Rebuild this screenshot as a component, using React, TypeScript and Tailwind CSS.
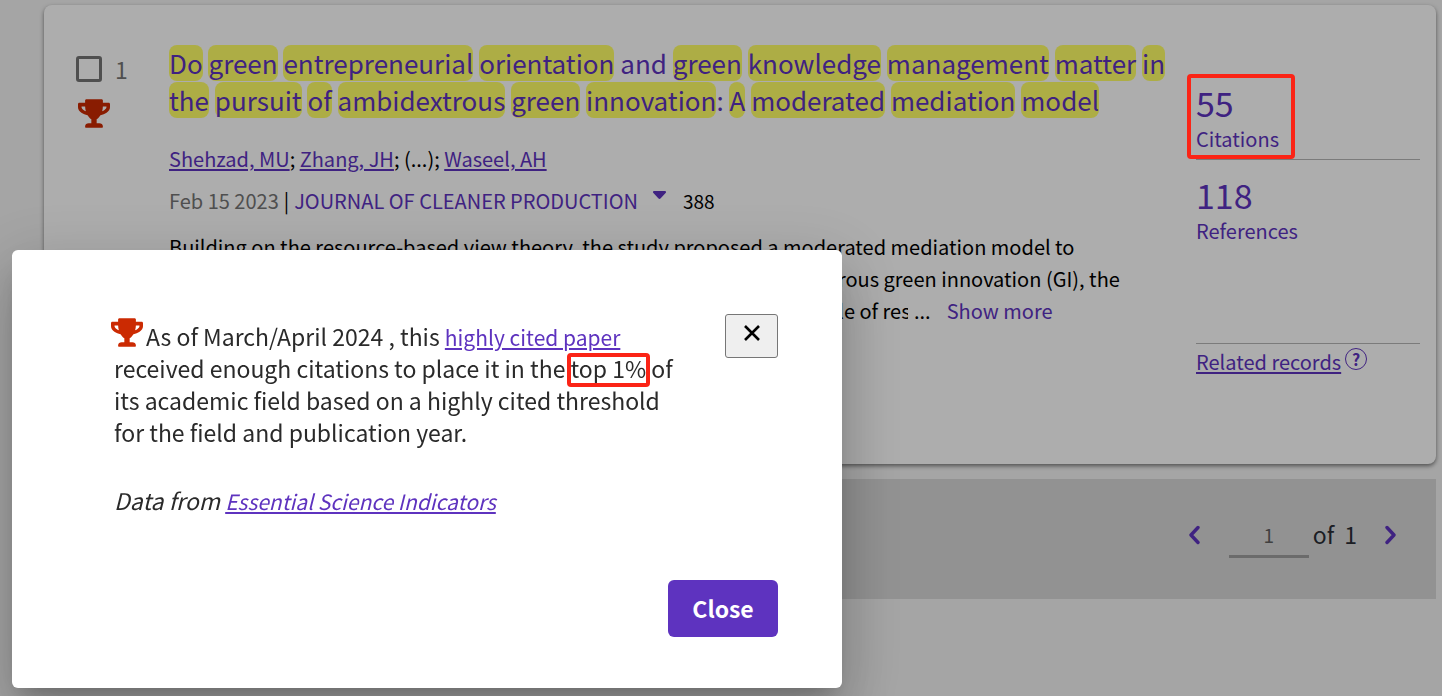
import { useState } from 'react';
import { FaTrophy } from 'react-icons/fa';

type TitleWord = {
  text: string;
  plain?: boolean;
  after?: string;
};

const titleWords: TitleWord[] = [
  { text: 'Do' },
  { text: 'green' },
  { text: 'entrepreneurial' },
  { text: 'orientation' },
  { text: 'and', plain: true },
  { text: 'green' },
  { text: 'knowledge' },
  { text: 'management' },
  { text: 'matter' },
  { text: 'in' },
  { text: 'the' },
  { text: 'pursuit' },
  { text: 'of' },
  { text: 'ambidextrous' },
  { text: 'green' },
  { text: 'innovation', after: ':' },
  { text: 'A' },
  { text: 'moderated' },
  { text: 'mediation' },
  { text: 'model' },
];

function RecordTitle() {
  return (
    <h3 className="text-[26px] leading-[37px]">
      <a href="#record" className="text-[#5e33bf]">
        {titleWords.map((word, index) => (
          <span key={index}>
            {word.plain ? (
              word.text
            ) : (
              <mark className="inline-block rounded-lg bg-[#ffff66] leading-9 text-inherit">
                {word.text}
              </mark>
            )}
            {word.after}{' '}
          </span>
        ))}
      </a>
    </h3>
  );
}

function RecordStats() {
  return (
    <aside className="flex w-56 shrink-0 flex-col pt-10 text-xl text-[#5e33bf]">
      <div className="relative border-b border-[#b5b5b5] pb-1.5">
        <a href="#citations" className="block">
          <span className="block text-[34px] leading-[44px]">55</span>
          <span className="block leading-7">Citations</span>
        </a>
        <span className="pointer-events-none absolute -top-[7px] -left-[9px] z-20 h-[85px] w-[108px] rounded-sm border-4 border-[#fb2416]" />
      </div>
      <div className="pt-[13px]">
        <a href="#references" className="block">
          <span className="block text-[34px] leading-[44px]">118</span>
          <span className="block leading-7">References</span>
        </a>
      </div>
      <div className="mt-[98px] flex items-start gap-1 border-t border-[#b5b5b5] pt-1">
        <a
          href="#related"
          className="leading-7 underline decoration-2 underline-offset-2">
          Related records
        </a>
        <button
          type="button"
          aria-label="About related records"
          className="flex size-[22px] items-center justify-center rounded-full border border-[#5e33bf] text-base font-bold">
          ?
        </button>
      </div>
    </aside>
  );
}

function RecordCard() {
  const [selected, setSelected] = useState(false);

  return (
    <article className="flex min-h-[459px] rounded-lg bg-white pt-9 pr-4 pl-8 shadow-[0_2px_4px_rgba(0,0,0,0.5)]">
      <div className="w-[93px] shrink-0 pt-3">
        <label className="flex items-center gap-[13px] text-[23px] leading-8 text-[#757575]">
          <input
            type="checkbox"
            aria-label="Select record 1"
            checked={selected}
            onChange={(e) => setSelected(e.target.checked)}
            className="size-[26px] appearance-none rounded-[3px] border-3 border-[#757575] checked:bg-[#5e33bf]"
          />
          1
        </label>
        <FaTrophy className="mt-3.5 ml-0.5 h-[29px] w-8 text-[#cb2a02]" />
      </div>
      <div className="min-w-0 grow pt-[3px] pr-6">
        <RecordTitle />
        <p className="mt-[25px] text-xl leading-8">
          <a
            href="#shehzad"
            className="text-[#5e33bf] underline decoration-2 underline-offset-2">
            Shehzad, MU
          </a>
          ;{' '}
          <a
            href="#zhang"
            className="text-[#5e33bf] underline decoration-2 underline-offset-2">
            Zhang, JH
          </a>
          ; (...);{' '}
          <a
            href="#waseel"
            className="text-[#5e33bf] underline decoration-2 underline-offset-2">
            Waseel, AH
          </a>
        </p>
        <div className="mt-2.5 flex items-center text-xl leading-8">
          <span className="text-[#757575]">Feb 15 2023</span>
          <span className="px-[5px]">|</span>
          <button
            type="button"
            className="flex items-center gap-[15px] text-[#5e33bf]">
            JOURNAL OF CLEANER PRODUCTION
            <svg viewBox="0 0 13 8" className="mb-3 h-2 w-[13px]">
              <path
                d="M1.2 0h10.6c1.1 0 1.6 1.3.8 2.1L7.7 7.3a1.7 1.7 0 0 1-2.4 0L.4 2.1C-.4 1.3.1 0 1.2 0z"
                fill="currentColor"
              />
            </svg>
          </button>
          <span className="ml-[17px] text-[19px]">388</span>
        </div>
        <div className="mt-3.5 text-xl leading-8">
          <p>
            Building on the resource-based view theory, the study proposed a
            moderated mediation model to
          </p>
          <p>
            examine a link between green entrepreneurial orientation and
            ambidextrous green innovation (GI), the
          </p>
          <div className="flex">
            <p className="w-[739px] overflow-hidden whitespace-nowrap">
              mediating role of green knowledge management (GKM) &amp;
              moderating role of res
            </p>
            <span className="pl-1.5">...</span>
            <button type="button" className="pl-4 text-[#5e33bf]">
              Show more
            </button>
          </div>
        </div>
      </div>
      <RecordStats />
    </article>
  );
}

function Pagination() {
  const [page, setPage] = useState('1');

  return (
    <nav className="mt-[15px] flex h-[120px] items-center justify-end bg-[#d8d8d8] pr-[39px] pb-2.5 text-[23px] text-[#2a2d35]">
      <button type="button" aria-label="Previous page" className="mr-[29px] pt-0.5">
        <svg viewBox="0 0 12 20" className="h-5 w-3 text-[#5e33bf]">
          <path
            d="M10 2.5 L3 10 L10 17.5"
            fill="none"
            stroke="currentColor"
            strokeWidth="3.4"
            strokeLinecap="round"
            strokeLinejoin="round"
          />
        </svg>
      </button>
      <input
        type="text"
        aria-label="Page"
        value={page}
        onChange={(e) => setPage(e.target.value)}
        className="mt-1 h-[43px] w-20 border-b-3 border-[#9e9e9e] text-center text-[19px] text-[#616161]"
      />
      <span className="ml-1">of</span>
      <span className="mr-7 ml-2.5">1</span>
      <button type="button" aria-label="Next page" className="pt-0.5">
        <svg viewBox="0 0 12 20" className="h-5 w-3 text-[#5e33bf]">
          <path
            d="M2 2.5 L9 10 L2 17.5"
            fill="none"
            stroke="currentColor"
            strokeWidth="3.4"
            strokeLinecap="round"
            strokeLinejoin="round"
          />
        </svg>
      </button>
    </nav>
  );
}

function HighlyCitedDialog({ onClose }: { onClose: () => void }) {
  return (
    <div className="fixed inset-0 z-10 flex items-end bg-black/32 pb-2 pl-3">
      <div
        role="dialog"
        aria-label="Highly cited paper"
        className="flex h-[438px] w-[830px] flex-col justify-between rounded-md bg-white pt-16 pr-16 pb-[51px] pl-[102px] shadow-[0_15px_21px_-10px_rgba(0,0,0,0.2),0_34px_53px_4px_rgba(0,0,0,0.14),0_13px_64px_11px_rgba(0,0,0,0.12)]">
        <div className="flex items-start justify-between">
          <div className="w-[570px] pt-1.5 text-[23px] leading-8 text-[#2a2a2a]">
            <p>
              <FaTrophy className="-mt-0.5 mr-[3px] -ml-[3px] inline h-[29px] w-8 align-top text-[#cb2a02]" />
              As of March/April 2024 , this{' '}
              <a
                href="#highly-cited"
                className="text-[21px] leading-none text-[#5e33bf] underline decoration-2 underline-offset-2">
                highly cited paper
              </a>
              <br />
              received enough citations to place it in the{' '}
              <span className="relative">
                top 1%
                <span className="pointer-events-none absolute -inset-x-1 top-0.5 -bottom-0.5 rounded-sm border-4 border-[#fb2416]" />
              </span>{' '}
              of
              <br />
              its academic field based on a highly cited threshold
              <br />
              for the field and publication year.
            </p>
            <p className="mt-9 italic">
              Data from{' '}
              <a
                href="#esi"
                className="text-[21px] leading-none text-[#5e33bf] underline decoration-2 underline-offset-2">
                Essential Science Indicators
              </a>
            </p>
          </div>
          <button
            type="button"
            aria-label="Dismiss"
            onClick={onClose}
            className="flex h-11 w-[53px] justify-center rounded-[3px] border border-[#767676] bg-[#efefef] pt-2.5">
            <svg viewBox="0 0 16 16" className="size-4">
              <path
                d="M1 1 L15 15 M15 1 L1 15"
                stroke="#000"
                strokeWidth="2.6"
              />
            </svg>
          </button>
        </div>
        <button
          type="button"
          onClick={onClose}
          className="h-[57px] w-[110px] self-end rounded-md bg-[#5e33bf] text-[23px] font-bold text-white">
          Close
        </button>
      </div>
    </div>
  );
}

export default function App() {
  const [open, setOpen] = useState(true);

  return (
    <div className="min-h-screen bg-[#f3f3f3] pt-[5px] pr-1.5 pl-11 font-['Noto_Sans_CJK_SC',sans-serif] text-black">
      <RecordCard />
      <Pagination />
      {open && <HighlyCitedDialog onClose={() => setOpen(false)} />}
    </div>
  );
}
